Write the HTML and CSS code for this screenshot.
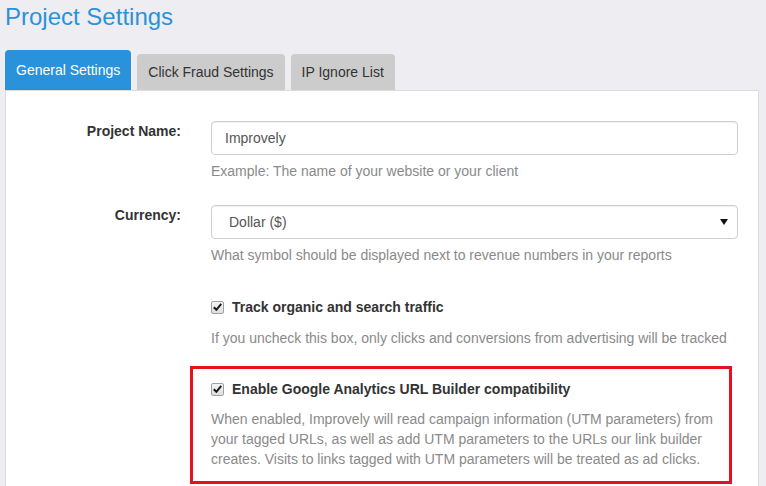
FILE: index.html
```html
<!DOCTYPE html>
<html lang="en">

<head>
    <meta charset="UTF-8" />
    <meta name="viewport" content="width=device-width, initial-scale=1.0" />
    <title>Project Settings</title>
    <link rel="stylesheet" href="styles.css">
</head>

<body>
    <div class="page">
        <h1 class="page-title">Project Settings</h1>

        <ul class="tabs">
            <li class="tab active">General Settings</li>
            <li class="tab">Click Fraud Settings</li>
            <li class="tab">IP Ignore List</li>
        </ul>

        <div class="panel">
            <form class="settings-form">
                <div class="form-row">
                    <label class="row-label" for="projectName">Project Name:</label>
                    <div class="row-field">
                        <input type="text" id="projectName" class="text-input" value="Improvely" />
                        <p class="help">Example: The name of your website or your client</p>
                    </div>
                </div>

                <div class="form-row">
                    <label class="row-label" for="currency">Currency:</label>
                    <div class="row-field">
                        <div class="select-wrap">
                            <select id="currency" class="text-input select-input">
                                <option>Dollar ($)</option>
                            </select>
                            <svg class="select-arrow" width="8" height="6" viewBox="0 0 8 6">
                                <path d="M0 0 H8 L4 6 Z" fill="#111" />
                            </svg>
                        </div>
                        <p class="help">What symbol should be displayed next to revenue numbers in your reports</p>
                    </div>
                </div>

                <div class="form-row">
                    <span class="row-label"></span>
                    <div class="row-field">
                        <label class="check">
                            <span class="check-box">
                                <svg width="9" height="8" viewBox="0 0 9 8">
                                    <path d="M0.8 4.2 L3.4 6.8 L8.2 0.8" fill="none" stroke="#1a1a1a" stroke-width="2" />
                                </svg>
                            </span>
                            Track organic and search traffic
                        </label>
                        <p class="help">If you uncheck this box, only clicks and conversions from advertising will be tracked</p>
                    </div>
                </div>

                <div class="form-row">
                    <span class="row-label"></span>
                    <div class="row-field">
                        <div class="highlight">
                            <label class="check">
                                <span class="check-box">
                                    <svg width="9" height="8" viewBox="0 0 9 8">
                                        <path d="M0.8 4.2 L3.4 6.8 L8.2 0.8" fill="none" stroke="#1a1a1a" stroke-width="2" />
                                    </svg>
                                </span>
                                Enable Google Analytics URL Builder compatibility
                            </label>
                            <p class="help">When enabled, Improvely will read campaign information (UTM parameters) from
                                your tagged URLs, as well as add UTM parameters to the URLs our link builder creates.
                                Visits to links tagged with UTM parameters will be treated as ad clicks.</p>
                        </div>
                    </div>
                </div>
            </form>
        </div>
    </div>
</body>

</html>
```

FILE: styles.css
```css
:root {
    --bg: #eeeef2;
    --blue: #2a92db;
    --tab-gray: #cccccc;
    --text: #333333;
    --dim-text: #8a8a8a;
    --border: #dcdcdc;
    --red: #e8101c;
}

* {
    margin: 0;
    padding: 0;
    box-sizing: border-box;
    font-family: 'Liberation Sans', Arial, sans-serif;
}

html,
body {
    height: 100%;
    overflow: hidden;
}

body {
    background: var(--bg);
    color: var(--text);
    font-size: 14px;
    line-height: 20px;
}

.page {
    margin-right: 7px;
    padding-left: 5px;
    height: 100%;
    display: flex;
    flex-direction: column;
}

.page-title {
    font-size: 24px;
    font-weight: 400;
    line-height: 32px;
    color: var(--blue);
    padding-top: 1px;
    height: 50px;
}

.tabs {
    list-style: none;
    display: flex;
    align-items: flex-end;
    gap: 6px;
}

.tab {
    height: 36px;
    padding: 0 11px;
    display: flex;
    align-items: center;
    background: var(--tab-gray);
    color: #333;
    border-radius: 4px 4px 0 0;
    font-size: 14px;
}

.tab.active {
    height: 40px;
    background: var(--blue);
    color: #fff;
}

.panel {
    flex: 1;
    background: #fff;
    border: 1px solid var(--border);
    border-bottom: none;
    padding: 30px 20px 0 0;
}

.settings-form {
    display: flex;
    flex-direction: column;
    gap: 24px;
}

.form-row {
    display: grid;
    grid-template-columns: 175px 1fr;
    column-gap: 30px;
}

.row-label {
    text-align: right;
    font-weight: 700;
    color: var(--text);
}

.text-input {
    width: 100%;
    height: 34px;
    padding: 0 13px;
    border: 1px solid #cfcfcf;
    border-radius: 4px;
    background: #fff;
    color: #555;
    font-size: 14px;
    box-shadow: inset 0 1px 1px rgba(0, 0, 0, 0.06);
}

.select-wrap {
    position: relative;
}

.select-input {
    appearance: none;
    -webkit-appearance: none;
    padding-left: 17px;
}

.select-arrow {
    position: absolute;
    right: 10px;
    top: 14px;
}

.help {
    margin-top: 6px;
    color: var(--dim-text);
}

.check {
    display: flex;
    align-items: center;
    gap: 8px;
    font-weight: 700;
    color: var(--text);
    margin-top: 8px;
}

.check-box {
    width: 13px;
    height: 13px;
    border: 1px solid #a0a0a0;
    border-radius: 2px;
    background: linear-gradient(#f4f4f4, #dedede);
    display: flex;
    align-items: center;
    justify-content: center;
}

.check + .help {
    margin-top: 11px;
}

.highlight {
    margin: -6px 6px 0 -21px;
    border: 3px solid var(--red);
    padding: 5px 14px 12px 18px;
}

.highlight .check {
    margin-top: 5px;
}

.highlight .help {
    margin-top: 10px;
}
```
